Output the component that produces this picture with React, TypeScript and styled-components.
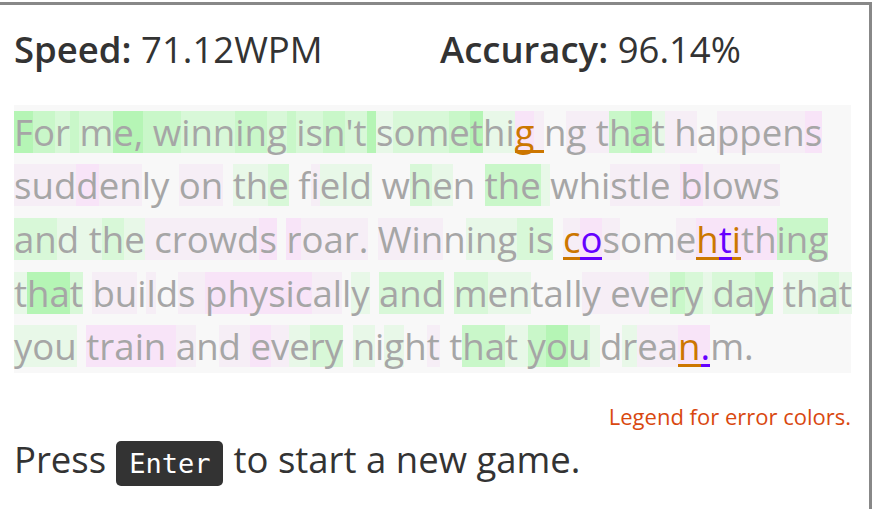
import React from "react";
import styled, { createGlobalStyle } from "styled-components";

const GlobalStyle = createGlobalStyle`
  html, body { margin: 0; padding: 0; background: #ffffff; overflow: hidden; }
  body { font-family: "Open Sans", "Noto Sans", sans-serif; color: #333333; }
`;

const Frame = styled.div`
  box-sizing: border-box;
  width: 875px;
  min-height: 530px;
  margin: 2px 0 0 -3px;
  border: 3px solid #888888;
  padding: 0 0 0 14px;
`;

const Stats = styled.div`
  display: grid;
  grid-template-columns: 426px 1fr;
  padding-top: 22px;
  height: 100px;
  box-sizing: border-box;
`;

const Stat = styled.div`
  font-size: 36.5px;
  line-height: 44px;
  color: #333333;
  white-space: nowrap;
`;

const StatLabel = styled.span`
  font-weight: 600;
`;

const TextBox = styled.div`
  width: 837px;
  background: #f8f8f8;
  display: flex;
  flex-direction: column;
`;

const Line = styled.div`
  height: 53.6px;
  display: flex;
  align-items: center;
  white-space: pre;
`;

const bgMap: Record<string, string> = {
  "3": "#b5f5b5",
  "2": "#c9f7c9",
  "1": "#d8f8d8",
  "0": "#e8f8e8",
  p: "#f8e4f8",
  q: "#f6eef6",
  ".": "transparent",
};

const Ch = styled.span<{ $bg: string; $err?: string }>`
  display: inline-block;
  height: 42px;
  line-height: 42px;
  font-size: 36.6px;
  color: ${(p) => p.$err || "#a6a6a6"};
  background: ${(p) => p.$bg};
  box-shadow: ${(p) => (p.$err ? `inset 0 -3px 0 ${p.$err}` : "none")};
  white-space: pre;
`;

const Legend = styled.div`
  width: 837px;
  text-align: right;
  font-size: 22px;
  line-height: 28px;
  color: #d9480f;
  margin-top: 29px;
`;

const Prompt = styled.div`
  font-size: 36.5px;
  line-height: 44px;
  color: #333333;
  margin-top: 7px;
  display: flex;
  align-items: baseline;
  gap: 10px;
`;

const Kbd = styled.span`
  display: inline-block;
  background: #333333;
  color: #ffffff;
  font-family: "DejaVu Sans Mono", "Liberation Mono", monospace;
  font-size: 27px;
  line-height: 45px;
  height: 45px;
  padding: 0 13px;
  border-radius: 5px;
`;

const ORANGE = "#cc7700";
const PURPLE = "#6600ff";

type LineData = { t: string; c: string; e: Record<number, string> };

const lines: LineData[] = [
  {
    t: "For me, winning isn't somethig ng that happens",
    c: "32121332" + "21112212" + "112113" + "0112300" + "pq.qqq" + "230q" + "q.qqqqp",
    e: { 29: ORANGE, 30: ORANGE },
  },
  {
    t: "suddenly on the field when the whistle blows",
    c: "qqqpqq..." + "qq." + "001." + ".q000." + ".10.." + "2220" + "...qqqqq" + "pqqqq",
    e: {},
  },
  {
    t: "and the crowds roar. Winning is cosomehtithing",
    c: "1100" + "010q" + "qqqqqp." + "pqqqq." + "qqq.0001" + "11." + "qpq..qppppp222",
    e: { 32: ORANGE, 33: PURPLE, 38: ORANGE, 39: PURPLE, 40: ORANGE },
  },
  {
    t: "that builds physically and mentally every day that",
    c: "0331." + "qq.q.qq" + "ppppppqq.0." + "111." + "100....qq" + "qq0210" + "112." + "0010",
    e: {},
  },
  {
    t: "you train and every night that you drean.m.",
    c: "000." + "pppppp" + "q.qq" + "pq011." + "0.0.q." + ".2200" + "2310" + ".0qqpp..",
    e: { 39: ORANGE, 40: PURPLE },
  },
];

export default function App() {
  return (
    <>
      <GlobalStyle />
      <Frame>
        <Stats>
          <Stat>
            <StatLabel>Speed:</StatLabel> 71.12WPM
          </Stat>
          <Stat>
            <StatLabel>Accuracy:</StatLabel> 96.14%
          </Stat>
        </Stats>
        <TextBox>
          {lines.map((ln, li) => (
            <Line key={li}>
              {ln.t.split("").map((ch, i) => (
                <Ch key={i} $bg={bgMap[ln.c[i]] || "transparent"} $err={ln.e[i]}>
                  {ch}
                </Ch>
              ))}
            </Line>
          ))}
        </TextBox>
        <Legend>Legend for error colors.</Legend>
        <Prompt>
          <span>Press</span>
          <Kbd>Enter</Kbd>
          <span>to start a new game.</span>
        </Prompt>
      </Frame>
    </>
  );
}
